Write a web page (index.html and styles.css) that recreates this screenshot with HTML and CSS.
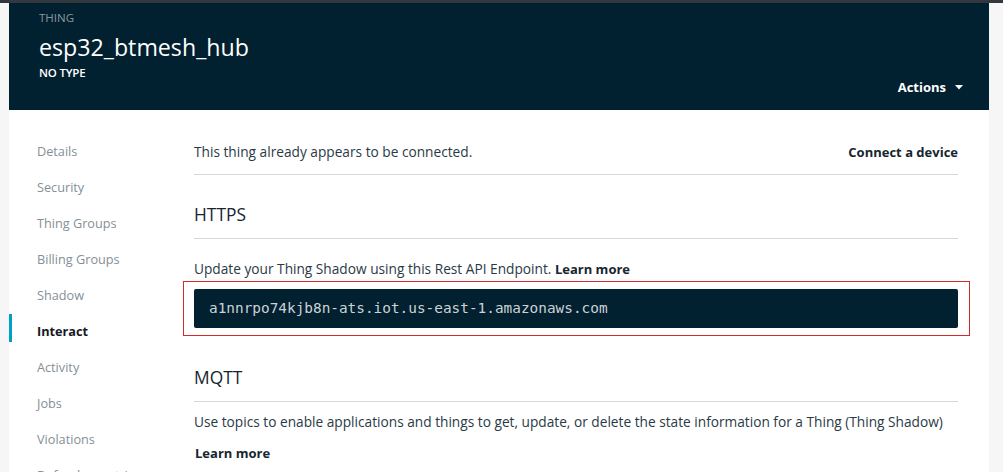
FILE: index.html
```html
<!DOCTYPE html>
<html>
<head>
<meta charset="utf-8">
<link rel="stylesheet" href="styles.css">
</head>
<body>
<div class="topstrip"></div>
<div class="page">
  <header class="hdr">
    <div class="hdr-label">THING</div>
    <h1 class="hdr-title">esp32_btmesh_hub</h1>
    <div class="hdr-type">NO TYPE</div>
    <div class="hdr-actions">
      <span>Actions</span>
      <svg class="caret" width="8" height="5" viewBox="0 0 8 5"><path d="M0 0H8L4 4.5Z" fill="#fff"/></svg>
    </div>
  </header>
  <div class="body">
    <nav class="nav">
      <div class="nav-item">Details</div>
      <div class="nav-item">Security</div>
      <div class="nav-item">Thing Groups</div>
      <div class="nav-item">Billing Groups</div>
      <div class="nav-item">Shadow</div>
      <div class="nav-item active">Interact</div>
      <div class="nav-item">Activity</div>
      <div class="nav-item">Jobs</div>
      <div class="nav-item">Violations</div>
      <div class="nav-item">Defender metrics</div>
    </nav>
    <main class="main">
      <div class="intro">
        <span>This thing already appears to be connected.</span>
        <span class="link">Connect a device</span>
      </div>
      <h2 class="sec-title">HTTPS</h2>
      <p class="text first">Update your Thing Shadow using this Rest API Endpoint. <span class="link">Learn more</span></p>
      <div class="highlight">
        <div class="code">a1nnrpo74kjb8n-ats.iot.us-east-1.amazonaws.com</div>
      </div>
      <h2 class="sec-title mqtt">MQTT</h2>
      <p class="text second">Use topics to enable applications and things to get, update, or delete the state information for a Thing (Thing Shadow)</p>
      <p class="text more"><span class="link">Learn more</span></p>
    </main>
  </div>
</div>
</body>
</html>
```

FILE: styles.css
```css
html, body {
  margin: 0;
  padding: 0;
}
body {
  background: #f6f6f6;
  font-family: "Open Sans", "Noto Sans", sans-serif;
  font-size: 13.7px;
  color: #2a3a45;
  overflow: hidden;
  height: 472px;
}
.topstrip {
  height: 3px;
  background: #33373e;
}
.page {
  width: 980px;
  margin-left: 9px;
  background: #fff;
  height: 469px;
}
.hdr {
  position: relative;
  height: 107px;
  background: #012030;
  padding-left: 30px;
  box-sizing: border-box;
  padding-top: 8px;
}
.hdr-label {
  font-size: 11.5px;
  line-height: 14px;
  color: #8d979e;
}
.hdr-title {
  margin: 7px 0 0 0;
  font-size: 23.2px;
  line-height: 30px;
  font-weight: 400;
  color: #fff;
}
.hdr-type {
  margin-top: 4px;
  font-size: 11.5px;
  line-height: 14px;
  color: #fff;
  font-weight: 600;
  letter-spacing: -0.2px;
}
.hdr-actions {
  position: absolute;
  right: 26px;
  top: 74px;
  display: flex;
  align-items: center;
  gap: 9px;
  color: #fff;
  font-weight: 700;
  font-size: 13px;
  line-height: 20px;
}
.caret {
  display: block;
}
.body {
  display: flex;
}
.nav {
  width: 185px;
  padding-top: 23px;
  flex-shrink: 0;
}
.nav-item {
  position: relative;
  height: 36px;
  line-height: 36px;
  padding-left: 28px;
  color: #858f96;
  font-size: 12.7px;
  white-space: nowrap;
}
.nav-item.active {
  color: #16191f;
  font-weight: 700;
}
.nav-item.active::before {
  content: "";
  position: absolute;
  left: 0;
  top: 1px;
  width: 3px;
  height: 28px;
  background: #00a1c9;
}
.main {
  width: 764px;
}
.intro {
  display: flex;
  justify-content: space-between;
  padding-top: 32px;
  line-height: 20px;
  padding-bottom: 12px;
  border-bottom: 1px solid #d5dbdb;
}
.link {
  font-weight: 700;
  font-size: 13px;
  color: #16262f;
}
.sec-title {
  margin: 27px 0 0 0;
  font-size: 17.4px;
  line-height: 24px;
  font-weight: 400;
  color: #16262f;
  padding-bottom: 12px;
  border-bottom: 1px solid #d5dbdb;
}
.sec-title.mqtt {
  margin-top: 29px;
}
.text {
  margin: 0;
  line-height: 20px;
}
.text.first {
  margin-top: 20px;
}
.text.second {
  margin-top: 10px;
}
.text.more {
  margin-top: 11px;
  padding-left: 1px;
}
.highlight {
  margin: 2px -12px 0 -11px;
  border: 1px solid #d62a2a;
  padding: 7px 11px 7px 10px;
}
.code {
  height: 39px;
  background: #012030;
  border-radius: 2px;
  padding-left: 15px;
  font-family: "DejaVu Sans Mono", "Liberation Mono", monospace;
  font-size: 14.4px;
  line-height: 39px;
  color: #cdd2d5;
}
```
